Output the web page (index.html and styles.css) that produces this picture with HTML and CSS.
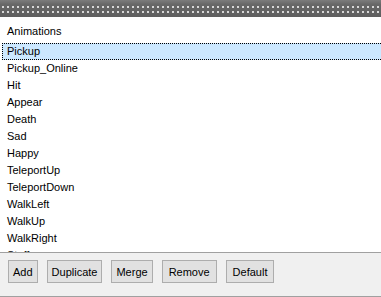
FILE: index.html
```html
<!DOCTYPE HTML>
<html>
<head>
<meta charset="utf-8">
<title>Animations</title>
<link rel="stylesheet" href="styles.css">
</head>
<body>
	<div class="window">
		<div class="grip"></div>
		<div class="panel">
			<div class="title">Animations</div>
			<ul class="list">
				<li class="on">Pickup</li>
				<li>Pickup_Online</li>
				<li>Hit</li>
				<li>Appear</li>
				<li>Death</li>
				<li>Sad</li>
				<li>Happy</li>
				<li>TeleportUp</li>
				<li>TeleportDown</li>
				<li>WalkLeft</li>
				<li>WalkUp</li>
				<li>WalkRight</li>
				<li>Stuff</li>
			</ul>
		</div>
		<div class="toolbar">
			<button>Add</button>
			<button>Duplicate</button>
			<button>Merge</button>
			<button class="wide">Remove</button>
			<button class="wide">Default</button>
		</div>
	</div>
</body>
</html>
```
FILE: styles.css
```css
*{
	margin: 0;
	padding: 0;
	box-sizing: border-box;
}
body{
	width: 381px;
	height: 297px;
	overflow: hidden;
	font-family: "Liberation Sans", Arial, sans-serif;
	font-size: 11px;
	color: #000;
	background: #fff;
}
.window{
	display: flex;
	flex-direction: column;
	height: 297px;
}
/* dotted drag handle on top */
.grip{
	height: 17px;
	padding: 6px 0 0 2px;
	background: linear-gradient(#7c7c7c, #686868 25%, #5f5f5f);
}
.grip::before{
	content: "";
	display: block;
	height: 7px;
	background:
		linear-gradient(90deg, #d8d8d8 2px, transparent 2px) 0 0 / 5px 2px repeat-x,
		linear-gradient(90deg, #d8d8d8 2px, transparent 2px) 0 5px / 5px 2px repeat-x;
}
.panel{
	height: 235px;
	overflow: hidden;
}
.title{
	height: 26px;
	padding: 7px 0 0 7px;
	line-height: 14px;
}
.list{
	list-style: none;
	margin-right: -4px;
}
.list li{
	height: 17px;
	line-height: 15px;
	margin-left: 2px;
	padding-left: 4px;
	border: 1px solid transparent;
	white-space: nowrap;
}
.list .on{
	background: #cce8ff;
	border: 1px dotted #000;
}
.toolbar{
	height: 45px;
	display: flex;
	align-items: flex-start;
	gap: 9px;
	padding: 7px 0 0 8px;
	background: #f0f0f0;
	border-top: 1px solid #a0a0a0;
	border-bottom: 1px solid #a0a0a0;
}
.toolbar button{
	height: 23px;
	padding: 0 4px;
	font-family: "Liberation Sans", Arial, sans-serif;
	font-size: 11px;
	color: #000;
	background: #e1e1e1;
	border: 1px solid #adadad;
}
.toolbar .wide{
	padding: 0 6px;
}
```
